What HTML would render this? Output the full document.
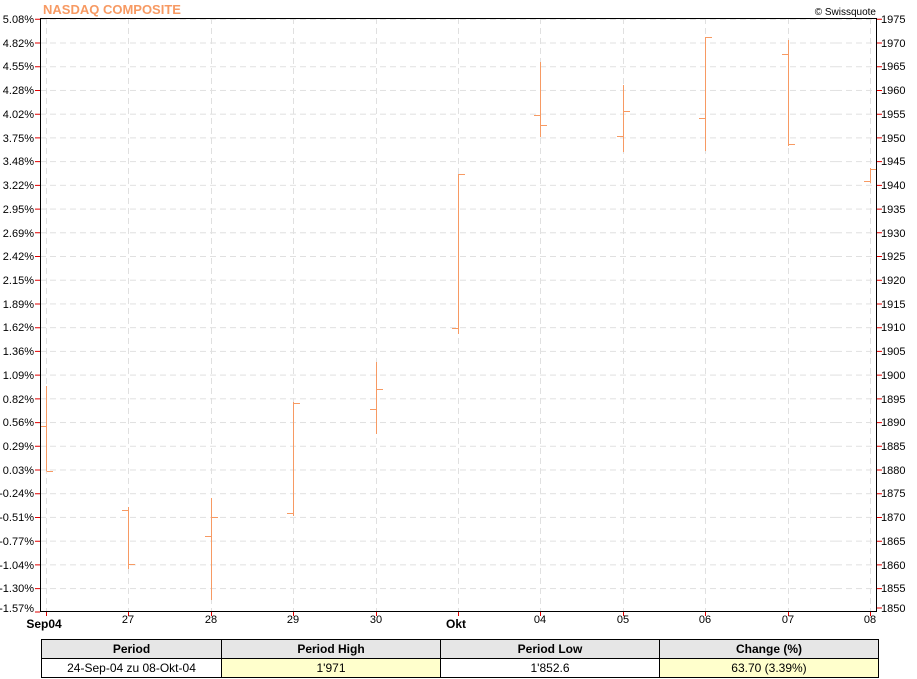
<!DOCTYPE html>
<html><head><meta charset="utf-8"><style>
body{margin:0;background:#fff;width:917px;height:679px;overflow:hidden;font-family:"Liberation Sans",Arial,sans-serif}
svg{position:absolute;left:0;top:0}
table{position:absolute;left:41px;top:639px;width:838px;border-collapse:collapse;font-size:12px;table-layout:fixed}
td{border:1px solid #000;text-align:center;height:18px;padding:0}
.h td{background:#e6e6e6;font-weight:bold}
.y{background:#ffffcc}
</style></head><body>
<svg width="917" height="679" xmlns="http://www.w3.org/2000/svg" font-family="Liberation Sans, Arial, sans-serif" font-size="11">
<defs><pattern id="hg" x="0" y="18.8" width="836" height="23.72" patternUnits="userSpaceOnUse">
<line x1="0" y1="0.5" x2="836" y2="0.5" stroke="#e0e0e0" stroke-dasharray="6,4"/></pattern></defs>
<text x="43" y="14" font-size="13" font-weight="bold" fill="#f79a63">NASDAQ COMPOSITE</text>
<text x="876" y="15" font-size="10" text-anchor="end" fill="#000">© Swissquote</text>
<rect x="40" y="19" width="836" height="592" fill="url(#hg)"/>
<g stroke="#e0e0e0" stroke-dasharray="6,4">
<line x1="46.5" y1="18" x2="46.5" y2="611"/><line x1="128.5" y1="18" x2="128.5" y2="611"/><line x1="211.5" y1="18" x2="211.5" y2="611"/><line x1="293.5" y1="18" x2="293.5" y2="611"/><line x1="376.5" y1="18" x2="376.5" y2="611"/><line x1="458.5" y1="18" x2="458.5" y2="611"/><line x1="540.5" y1="18" x2="540.5" y2="611"/><line x1="623.5" y1="18" x2="623.5" y2="611"/><line x1="705.5" y1="18" x2="705.5" y2="611"/><line x1="788.5" y1="18" x2="788.5" y2="611"/><line x1="870.5" y1="18" x2="870.5" y2="611"/>
</g>
<g stroke="#f79a63" fill="none">
<path d="M46.5 386V471M41 426.5H46.5M46.5 471.5H53"/>
<path d="M128.5 507V569M122 510.5H128.5M128.5 564.5H135"/>
<path d="M211.5 498V600M205 536.5H211.5M211.5 517.5H218"/>
<path d="M293.5 402V516M287 513.5H293.5M293.5 403.5H300"/>
<path d="M376.5 362V434M370 409.5H376.5M376.5 389.5H383"/>
<path d="M458.5 174V334M452 328.5H458.5M458.5 174.5H465"/>
<path d="M540.5 62V137M534 115.5H540.5M540.5 125.5H547"/>
<path d="M623.5 85V152M617 136.5H623.5M623.5 111.5H630"/>
<path d="M705.5 37V151M699 118.5H705.5M705.5 37.5H712"/>
<path d="M788.5 40V146M782 54.5H788.5M788.5 144.5H795"/>
<path d="M870.5 168V183M864 181.5H870.5M870.5 169.5H876"/>
</g>
<g stroke="#000"><line x1="40" y1="18.5" x2="876" y2="18.5"/><line x1="40" y1="611.5" x2="877" y2="611.5"/><line x1="40.5" y1="18" x2="40.5" y2="612"/><line x1="876.5" y1="18" x2="876.5" y2="612"/></g>
<g stroke="#e00000">
<path d="M35 19.3h5M35 43h5M35 66.7h5M35 90.5h5M35 114.2h5M35 137.9h5M35 161.6h5M35 185.4h5M35 209.1h5M35 232.8h5M35 256.5h5M35 280.2h5M35 304h5M35 327.7h5M35 351.4h5M35 375.1h5M35 398.9h5M35 422.6h5M35 446.3h5M35 470h5M35 493.7h5M35 517.5h5M35 541.2h5M35 564.9h5M35 588.6h5M35 612h5"/>
<path d="M877 19.3h5M877 43h5M877 66.7h5M877 90.5h5M877 114.2h5M877 137.9h5M877 161.6h5M877 185.4h5M877 209.1h5M877 232.8h5M877 256.5h5M877 280.2h5M877 304h5M877 327.7h5M877 351.4h5M877 375.1h5M877 398.9h5M877 422.6h5M877 446.3h5M877 470h5M877 493.7h5M877 517.5h5M877 541.2h5M877 564.9h5M877 588.6h5M877 608h5"/>
<path d="M46.5 612v4M128.5 612v4M211.5 612v4M293.5 612v4M376.5 612v4M458.5 612v4M540.5 612v4M623.5 612v4M705.5 612v4M788.5 612v4M870.5 612v4"/>
</g>
<g text-anchor="end" fill="#000">
<text x="34" y="23">5.08%</text><text x="34" y="47">4.82%</text><text x="34" y="70">4.55%</text><text x="34" y="94">4.28%</text><text x="34" y="118">4.02%</text><text x="34" y="142">3.75%</text><text x="34" y="165">3.48%</text><text x="34" y="189">3.22%</text><text x="34" y="213">2.95%</text><text x="34" y="237">2.69%</text><text x="34" y="260">2.42%</text><text x="34" y="284">2.15%</text><text x="34" y="308">1.89%</text><text x="34" y="331">1.62%</text><text x="34" y="355">1.36%</text><text x="34" y="379">1.09%</text><text x="34" y="403">0.82%</text><text x="34" y="426">0.56%</text><text x="34" y="450">0.29%</text><text x="34" y="474">0.03%</text><text x="34" y="497">-0.24%</text><text x="34" y="521">-0.51%</text><text x="34" y="545">-0.77%</text><text x="34" y="569">-1.04%</text><text x="34" y="592">-1.30%</text><text x="34" y="612">-1.57%</text>
</g>
<g fill="#000">
<text x="881" y="23">1975</text><text x="881" y="47">1970</text><text x="881" y="70">1965</text><text x="881" y="94">1960</text><text x="881" y="118">1955</text><text x="881" y="142">1950</text><text x="881" y="165">1945</text><text x="881" y="189">1940</text><text x="881" y="213">1935</text><text x="881" y="237">1930</text><text x="881" y="260">1925</text><text x="881" y="284">1920</text><text x="881" y="308">1915</text><text x="881" y="331">1910</text><text x="881" y="355">1905</text><text x="881" y="379">1900</text><text x="881" y="403">1895</text><text x="881" y="426">1890</text><text x="881" y="450">1885</text><text x="881" y="474">1880</text><text x="881" y="497">1875</text><text x="881" y="521">1870</text><text x="881" y="545">1865</text><text x="881" y="569">1860</text><text x="881" y="592">1855</text><text x="881" y="612">1850</text>
</g>
<g text-anchor="middle" fill="#000">
<text x="44" y="628" font-size="12" font-weight="bold">Sep04</text>
<text x="128" y="623">27</text><text x="211" y="623">28</text><text x="293" y="623">29</text><text x="376" y="623">30</text>
<text x="456" y="628" font-size="12" font-weight="bold">Okt</text>
<text x="540" y="623">04</text><text x="623" y="623">05</text><text x="705" y="623">06</text><text x="788" y="623">07</text><text x="870" y="623">08</text>
</g>
</svg>
<table>
<colgroup><col style="width:180px"><col style="width:219px"><col style="width:219px"><col style="width:219px"></colgroup>
<tr class="h"><td>Period</td><td>Period High</td><td>Period Low</td><td>Change (%)</td></tr>
<tr><td>24-Sep-04 zu 08-Okt-04</td><td class="y">1'971</td><td>1'852.6</td><td class="y">63.70 (3.39%)</td></tr>
</table>
</body></html>
